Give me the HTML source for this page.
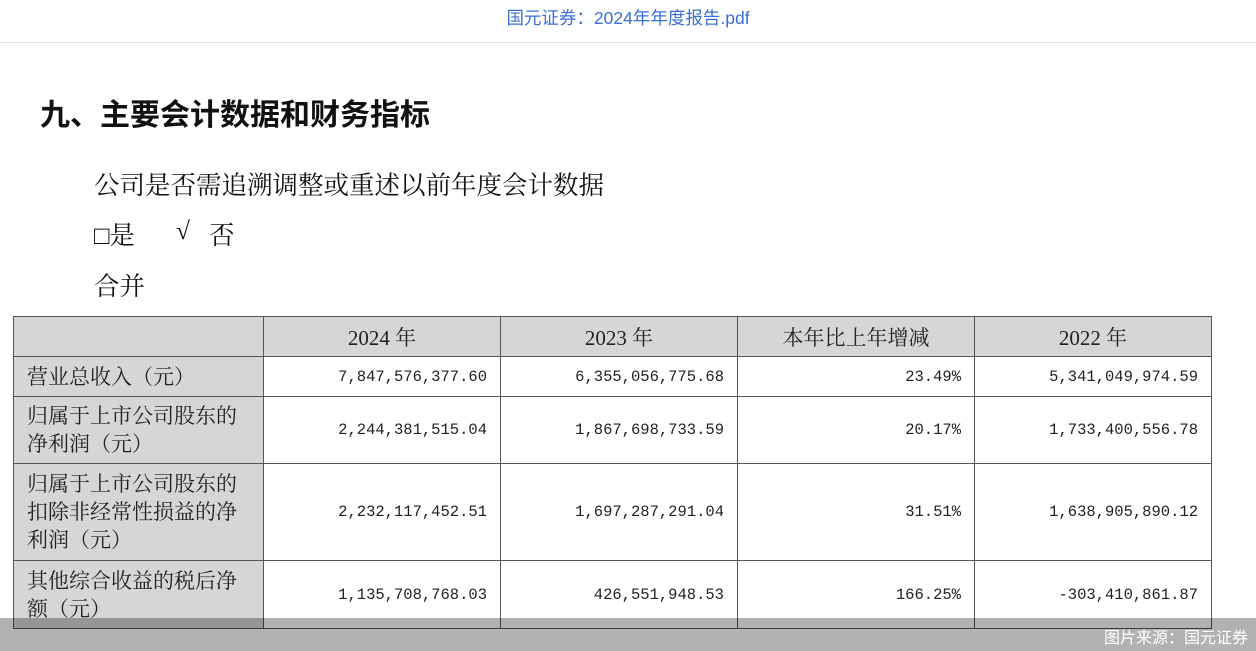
<!DOCTYPE html>
<html><head><meta charset="utf-8"><style>
body{margin:0;width:1256px;height:651px;background:#fff;position:relative;overflow:hidden;font-family:"Liberation Serif","Noto Serif CJK SC",serif;}
.top{position:absolute;left:0;top:0;width:1256px;height:42px;border-bottom:1px solid #e6e6e6;text-align:center;line-height:36px;color:#3a6fd8;font-family:"Liberation Sans","Noto Sans CJK SC",sans-serif;font-size:17.5px;}
h1{position:absolute;left:40px;top:90px;margin:0;font-size:30px;font-weight:bold;font-family:"Liberation Sans","Noto Sans CJK SC",sans-serif;color:#111;}
.p{position:absolute;left:94px;font-size:25.5px;color:#111;}
table{position:absolute;left:13px;top:316px;border-collapse:collapse;}
td{border:1px solid #555;padding:0;font-size:21px;color:#222;}
.h td{background:#d6d6d6;text-align:center;height:39px;}
td.l{background:#d6d6d6;padding-left:13px;line-height:28px;}
td.n{text-align:right;padding-right:13px;font-family:"Liberation Mono",monospace;font-size:15.5px;}
.ov{position:absolute;left:0;top:618px;width:1256px;height:33px;background:rgba(0,0,0,0.3);}
.src{position:absolute;right:8px;top:624px;color:#fff;font-family:"Liberation Sans","Noto Sans CJK SC",sans-serif;font-size:16px;}
</style></head><body>
<div class="top">国元证券：2024年年度报告.pdf</div>
<h1>九、主要会计数据和财务指标</h1>
<div class="p" style="top:166px">公司是否需追溯调整或重述以前年度会计数据</div>
<div class="p" style="top:216px">□是</div>
<div class="p" style="top:216px;left:176px">√</div>
<div class="p" style="top:216px;left:209px">否</div>
<div class="p" style="top:267px">合并</div>
<table>
<tr class="h"><td style="width:249px"></td><td style="width:236px">2024 年</td><td style="width:236px">2023 年</td><td style="width:236px">本年比上年增减</td><td style="width:236px">2022 年</td></tr>
<tr style="height:40px"><td class="l">营业总收入（元）</td><td class="n">7,847,576,377.60</td><td class="n">6,355,056,775.68</td><td class="n">23.49%</td><td class="n">5,341,049,974.59</td></tr>
<tr style="height:67px"><td class="l">归属于上市公司股东的<br>净利润（元）</td><td class="n">2,244,381,515.04</td><td class="n">1,867,698,733.59</td><td class="n">20.17%</td><td class="n">1,733,400,556.78</td></tr>
<tr style="height:97px"><td class="l">归属于上市公司股东的<br>扣除非经常性损益的净<br>利润（元）</td><td class="n">2,232,117,452.51</td><td class="n">1,697,287,291.04</td><td class="n">31.51%</td><td class="n">1,638,905,890.12</td></tr>
<tr style="height:68px"><td class="l">其他综合收益的税后净<br>额（元）</td><td class="n">1,135,708,768.03</td><td class="n">426,551,948.53</td><td class="n">166.25%</td><td class="n">-303,410,861.87</td></tr>
</table>
<div class="ov"></div>
<div class="src">图片来源：国元证券</div>
</body></html>
